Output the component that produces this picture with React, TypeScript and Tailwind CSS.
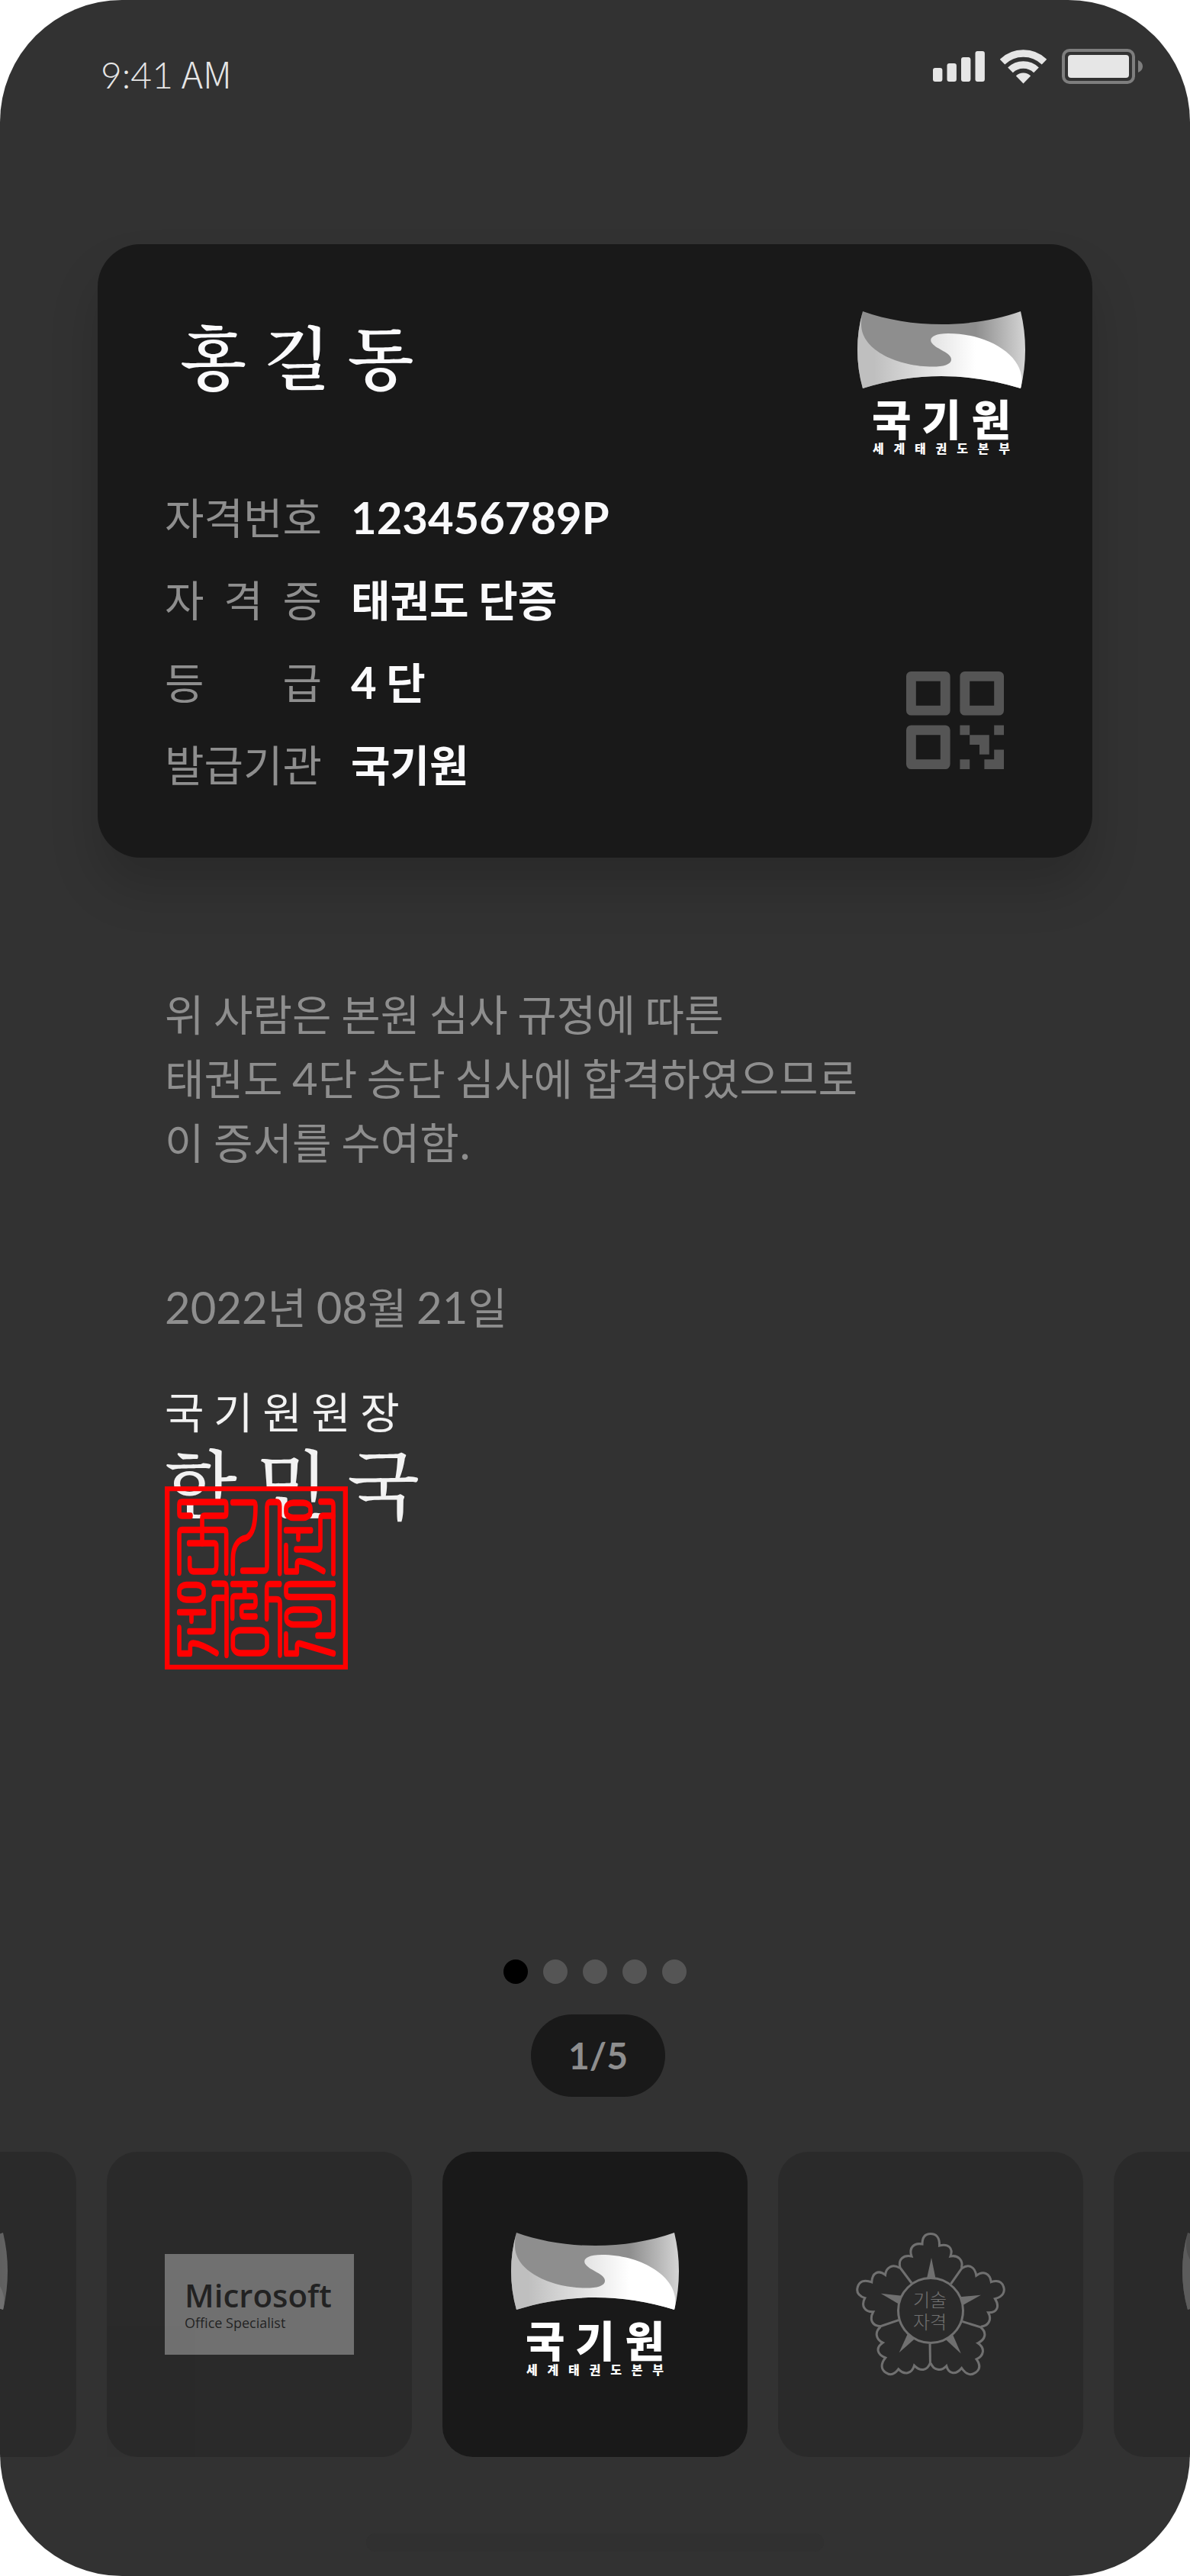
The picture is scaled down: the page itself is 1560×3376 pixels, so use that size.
import React from "react";

const HANGUL = "font-['Noto_Sans_CJK_KR',sans-serif]";
const LATIN = "font-['Lato',sans-serif]";
const BRUSH = "font-['Noto_Serif_CJK_KR','Noto_Sans_CJK_KR',serif]";

function SignalIcon() {
  return (
    <svg width="68" height="40" viewBox="0 0 68 40" fill="#e6e6e6" aria-hidden="true">
      <rect x="0" y="22" width="12.4" height="18" rx="3" />
      <rect x="18.5" y="16" width="12.4" height="24" rx="3" />
      <rect x="37" y="8" width="12.4" height="32" rx="3" />
      <rect x="55.5" y="0" width="12.4" height="40" rx="3" />
    </svg>
  );
}

function WifiIcon() {
  return (
    <svg width="61" height="45" viewBox="0 0 61 45" fill="none" aria-hidden="true">
      <path d="M3 16.1A39.5 39.5 0 0 1 58 16.1" stroke="#e6e6e6" strokeWidth="9.4" />
      <path d="M13.5 26.9A24.5 24.5 0 0 1 47.5 26.9" stroke="#e6e6e6" strokeWidth="9.6" />
      <path d="M30.5 44.5L20.8 34.4A14 14 0 0 1 40.2 34.4Z" fill="#e6e6e6" />
    </svg>
  );
}

function BatteryIcon() {
  return (
    <svg width="106" height="46" viewBox="0 0 106 46" fill="none" aria-hidden="true">
      <rect x="2" y="2" width="92" height="42" rx="8" stroke="#7e7e7e" strokeWidth="4" />
      <rect x="8" y="8" width="80" height="30" rx="4" fill="#e6e6e6" />
      <path d="M100 15C104 16.500 106 19.500 106 23C106 26.500 104 29.500 100 31Z" fill="#7e7e7e" />
    </svg>
  );
}

function QrIcon() {
  return (
    <svg className="size-32" viewBox="0 0 20 20" fill="#555555" aria-hidden="true">
      <path
        fillRule="evenodd"
        d="M1 0H8A1 1 0 0 1 9 1V8A1 1 0 0 1 8 9H1A1 1 0 0 1 0 8V1A1 1 0 0 1 1 0ZM2 2V7H7V2ZM12 0H19A1 1 0 0 1 20 1V8A1 1 0 0 1 19 9H12A1 1 0 0 1 11 8V1A1 1 0 0 1 12 0ZM13 2V7H18V2ZM1 11H8A1 1 0 0 1 9 12V19A1 1 0 0 1 8 20H1A1 1 0 0 1 0 19V12A1 1 0 0 1 1 11ZM2 13V18H7V13ZM11 11H13V13H11ZM18 11H20V13H18ZM13 13H17V17H15V15H13ZM11 18H13V20H11ZM18 16H20V20H16V18H18Z"
      />
    </svg>
  );
}

function Spread({ text, className }: { text: string; className: string }) {
  return (
    <span className={`flex justify-between ${className}`}>
      {text.split("").map((ch, i) => (
        <span key={i}>{ch}</span>
      ))}
    </span>
  );
}

/* Korean copy whose digits and Latin letters are set in the Latin face. */
function Mixed({ text }: { text: string }) {
  return (
    <>
      {text.split(/([0-9A-Z]+)/).map((part, i) =>
        i % 2 === 1 ? (
          <span key={i} className={`text-[58px] leading-none ${LATIN}`}>
            {part}
          </span>
        ) : (
          part
        ),
      )}
    </>
  );
}

function KukkiwonLogo({ id, markOnly = false }: { id: string; markOnly?: boolean }) {
  return (
    <span className={`flex h-[188px] w-[220px] flex-col items-center font-black text-white ${HANGUL}`}>
      <svg width="220" height="101" viewBox="0 0 220 101" className="shrink-0" aria-hidden="true">
        <defs>
          <linearGradient id={`${id}-dark`} gradientUnits="userSpaceOnUse" x1="155" y1="0" x2="220" y2="0">
            <stop offset="0" stopColor="#8e8e8e" />
            <stop offset="1" stopColor="#d4d4d4" />
          </linearGradient>
          <linearGradient id={`${id}-light`} gradientUnits="userSpaceOnUse" x1="22" y1="0" x2="155" y2="0">
            <stop offset="0" stopColor="#bfbfbf" />
            <stop offset="1" stopColor="#ffffff" />
          </linearGradient>
        </defs>
        <path
          d="M7 0C70 22.700 150 22.700 214 0C222 33 222 68 214 101C145 79.700 75 79.700 7 101C-2.300 68 -2.300 33 7 0Z"
          fill={`url(#${id}-dark)`}
        />
        <path
          d="M7 0C-2.300 33 -2.300 68 7 101C75 79.700 145 79.700 214 101C215 97 215.500 95 215.500 90C215 55 168 29 119 29C98 29 93 36 98 42C104 50 123 54 123 63C123 70 112 72.600 99 72.600C55 72.600 5 52 5 17C5 9 6 5 7 0Z"
          fill={`url(#${id}-light)`}
        />
      </svg>
      {!markOnly && (
        <>
          <Spread text="국기원" className="mt-3 w-[182px] text-[56px] leading-[52px]" />
          <Spread text="세계태권도본부" className="mt-1.5 w-[180px] text-[16px] leading-[16px]" />
        </>
      )}
    </span>
  );
}

function MicrosoftLogo() {
  return (
    <span className="flex h-[132px] w-[248px] flex-col bg-white pt-[30px] pl-[26px] text-left font-['Open_Sans',sans-serif] text-black">
      <span className="text-[42px] leading-[48px] font-semibold">Microsoft</span>
      <span className="text-[18px] leading-[24px]">Office Specialist</span>
    </span>
  );
}

const PETAL_TURNS = [0, 72, 144, 216, 288];

function TechLogo() {
  return (
    <svg width="196" height="188" viewBox="0 0 196 188" fill="none" aria-hidden="true">
      {PETAL_TURNS.map((deg) => (
        <g key={deg} transform={`rotate(${deg} 98 102)`}>
          <path
            d="M73 66L58 46C55 35 62 29 73 31C69 20 76 13 87 15C87 6 91 1.500 98 1.500C105 1.500 110 6 109.500 17C121 14 128 20 124 31C134 29 141 36 138.500 46"
            stroke="white"
            strokeWidth="3"
          />
          <path d="M99 33L104.500 60H93Z" fill="white" />
        </g>
      ))}
      <circle cx="98" cy="102" r="42.500" stroke="white" strokeWidth="3" />
      <g fill="white" fontSize="24" fontWeight="300" textAnchor="middle" fontFamily="'Noto Sans CJK KR', sans-serif">
        <text x="97" y="97">기술</text>
        <text x="97" y="126">자격</text>
      </g>
    </svg>
  );
}

function SealWon() {
  return (
    <>
      <rect x="477" y="43" width="96" height="39" rx="28" ry="15" />
      <path d="M476 115H575M525 115V137" />
      <path d="M477 156V223H520V203Q520 196 532 196C562 198 590 208 624 222" />
      <path d="M663 227V50Q663 40 650 40H612" />
      <path d="M663 77H620Q612 77 612 86V158Q612 165 604 165H516" />
    </>
  );
}

function Seal() {
  return (
    <svg className="size-60" viewBox="0 0 720 480" preserveAspectRatio="none" fill="none" aria-label="직인" role="img">
      <path d="M0 0H720V480H0ZM19 12.500V467.500H701V12.500Z" fill="#ff0000" fillRule="evenodd" />
      <g stroke="#ff0000" strokeWidth="17" strokeLinecap="round" strokeLinejoin="round">
        <path d="M102 77H66Q57 77 57 71V47Q57 41 66 41H233Q242 41 242 47V71Q242 77 233 77H156Q147 77 147 83V149" />
        <path d="M57 226V122Q57 114 68 114H231Q242 114 242 122V226" />
        <path d="M95 149H194Q203 149 203 156V208Q203 223 187 223H114Q98 223 98 208V190" />
        <path d="M266 42H348Q357 42 357 50C357 100 347 126 320 135C290 138 268 155 268 190V227" />
        <path d="M452 227V52Q452 41 440 41H416Q402 41 402 54V211Q402 221 390 221H305" />
        <SealWon />
        <g transform="translate(-420 215)">
          <SealWon />
        </g>
        <path d="M266 256H358M314 256V287" />
        <path d="M266 344V296Q266 288 275 288H348Q357 288 357 296V308Q357 315 348 315H314Q302 315 302 322V334Q302 341 312 341H357" />
        <path d="M401 346V268Q401 256 412 256H452M401 296H440Q453 296 453 306V441" />
        <rect x="268" y="377" width="134" height="60" rx="30" ry="18" />
        <path d="M664 256H495Q477 256 477 268V280Q477 290 495 290H650Q663 290 663 298V384Q663 391 654 391H600" />
        <rect x="478" y="323" width="132" height="39" rx="28" ry="15" />
        <path d="M477 388V438H520V419Q520 410 532 412L664 438" />
      </g>
    </svg>
  );
}

const FIELDS = [
  ["자격번호", "123456789P"],
  ["자격증", "태권도 단증"],
  ["등급", "4 단"],
  ["발급기관", "국기원"],
];

const TILES = [
  { id: "prev", label: "이전 자격증", logo: <KukkiwonLogo id="prev" markOnly /> },
  { id: "mos", label: "Microsoft Office Specialist", logo: <MicrosoftLogo /> },
  { id: "current", label: "국기원", logo: <KukkiwonLogo id="current" /> },
  { id: "tech", label: "기술자격", logo: <TechLogo /> },
  { id: "next", label: "다음 자격증", logo: <KukkiwonLogo id="next" markOnly /> },
];

export default function App() {
  return (
    <div className={`flex min-h-screen flex-col overflow-hidden rounded-[160px] bg-[#323232] ${HANGUL}`}>
      <header className="flex h-80 items-start justify-between pr-[62px] pl-[132px]">
        <time className={`pt-[68px] text-[48px] leading-[60px] font-light text-[#e6e6e6] ${LATIN}`}>
          9:41<span className={`leading-none ${HANGUL}`}> AM</span>
        </time>
        <div className="flex items-center gap-5 pt-16">
          <SignalIcon />
          <WifiIcon />
          <BatteryIcon />
        </div>
      </header>

      <main className="flex grow flex-col">
        <section className="mx-32 rounded-[56px] bg-[#191919] px-[88px] pt-[88px] pb-[70px] shadow-[0_40px_64px_rgba(0,0,0,0.16)]">
          <div className="flex h-[214px] justify-between">
            <h1 className={`pl-5 text-[90px] leading-[112px] font-semibold text-[#fafafc] ${BRUSH}`}>홍 길 동</h1>
            <KukkiwonLogo id="card" />
          </div>
          <div className="flex items-end justify-between">
            <dl className="text-[56px] leading-[108px]">
              {FIELDS.map(([label, value]) => (
                <div key={label} className="flex gap-[38px]">
                  <dt className="text-[#8e8e8e]">
                    <Spread text={label} className="w-[206px]" />
                  </dt>
                  <dd className="font-bold text-[#fafafc]">
                    <Mixed text={value} />
                  </dd>
                </div>
              ))}
            </dl>
            <button type="button" aria-label="QR 코드 보기" className="mr-7 mb-[46px]">
              <QrIcon />
            </button>
          </div>
        </section>

        <section className="px-[216px] pt-[161px] text-[56px] leading-[84px] text-[#8e8e8e]">
          <p>
            위 사람은 본원 심사 규정에 따른
            <br />
            <Mixed text="태권도 4단 승단 심사에 합격하였으므로" />
            <br />이 증서를 수여함.
          </p>
          <p className="mt-[132px]">
            <Mixed text="2022년 08월 21일" />
          </p>
          <div className="mt-[53px] text-[#f2f2f2]">
            <p>국 기 원 원 장</p>
            <p className={`text-[98px] leading-[100px] font-medium ${BRUSH}`}>한 민 국</p>
            <div className="relative -mt-[42px]">
              <Seal />
            </div>
          </div>
        </section>

        <nav aria-label="자격증 목록" className="mt-auto flex flex-col items-center">
          <div className="flex gap-5">
            {[1, 2, 3, 4, 5].map((n) => (
              <button
                key={n}
                type="button"
                aria-label={`${n}번째 자격증`}
                className={n === 1 ? "size-8 rounded-full bg-black" : "size-8 rounded-full bg-[#555555]"}
              />
            ))}
          </div>
          <p
            className={`mt-10 ml-2 flex h-[108px] w-44 items-center justify-center rounded-full bg-[#191919] text-[48px] leading-[60px] font-bold text-[#8e8e8e] ${LATIN}`}
          >
            1/5
          </p>
          <div className="mt-[72px] flex w-full justify-center gap-10 overflow-hidden">
            {TILES.map((tile) => (
              <button
                key={tile.id}
                type="button"
                aria-label={tile.label}
                className={
                  tile.id === "current"
                    ? "flex size-100 shrink-0 items-center justify-center rounded-[40px] bg-[#191919]"
                    : "flex size-100 shrink-0 items-center justify-center rounded-[40px] bg-[#191919] opacity-30"
                }
              >
                {tile.logo}
              </button>
            ))}
          </div>
        </nav>
      </main>

      <footer className="flex justify-center pt-25 pb-8">
        <div className="h-6 w-150 rounded-full bg-[#303030]" />
      </footer>
    </div>
  );
}
